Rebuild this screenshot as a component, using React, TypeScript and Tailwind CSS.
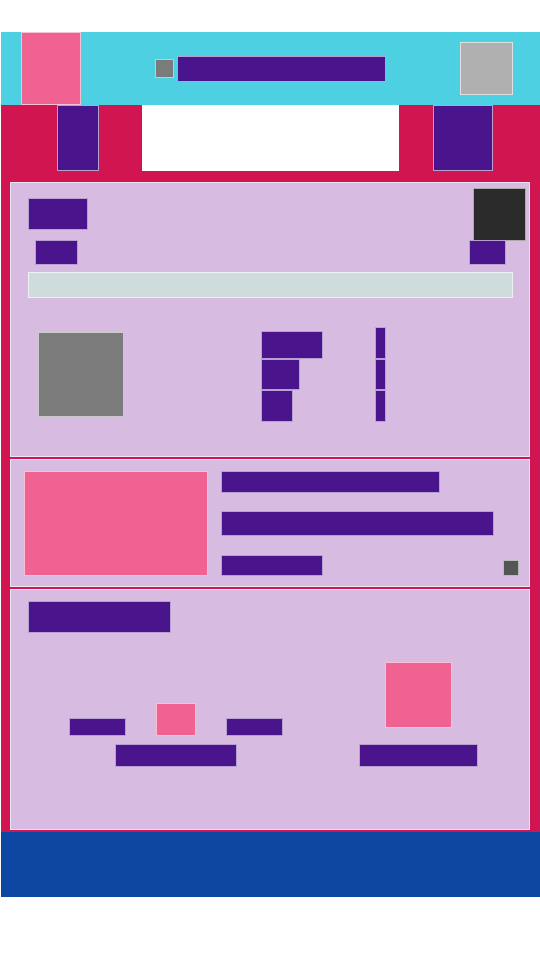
// Colour-block wireframe layout

const edge = 'border border-white/60';

function Block({ className }: { className: string }) {
  return <div className={`${edge} shrink-0 ${className}`}></div>;
}

export default function App() {
  return (
    <div className="min-h-screen bg-white pt-[32px] pl-[1px]">
      {/* Header */}
      <div className="h-[73px] bg-[#4dd0e1] flex items-center">
        <Block className="ml-[20px] w-[60px] h-[73px] bg-[#f06292]" />
        <Block className="ml-[74px] w-[19px] h-[19px] bg-[#7b7b7b]" />
        <Block className="ml-[3px] w-[209px] h-[26px] bg-[#4a148c]" />
        <Block className="ml-[74px] w-[53px] h-[53px] bg-[#b0b0b0]" />
      </div>

      {/* Main red area */}
      <div className="bg-[#d01550] pb-[2px]">
        {/* Nav row */}
        <div className="h-[66px] flex">
          <Block className="ml-[56px] w-[42px] h-[66px] bg-[#4a148c]" />
          <Block className="ml-[43px] w-[257px] h-[66px] bg-white" />
          <Block className="ml-[34px] w-[60px] h-[66px] bg-[#4a148c]" />
        </div>

        <div className="mt-[11px] ml-[9px] w-[520px] flex flex-col gap-[2px]">
          {/* Card 1 */}
          <div className={`${edge} h-[275px] bg-[#d8bbe0] flex flex-col`}>
            <div className="flex justify-between items-start">
              <div className="flex flex-col items-start pt-[15px] pl-[17px]">
                <Block className="w-[60px] h-[32px] bg-[#4a148c]" />
                <Block className="mt-[10px] ml-[7px] w-[43px] h-[25px] bg-[#4a148c]" />
              </div>
              <div className="flex flex-col items-end pt-[5px] pr-[3px]">
                <Block className="w-[53px] h-[53px] bg-[#2b2b2b]" />
                <Block className="-mt-[1px] mr-[20px] w-[37px] h-[25px] bg-[#4a148c]" />
              </div>
            </div>
            <Block className="mt-[7px] ml-[17px] w-[485px] h-[26px] bg-[#cfdcdc]" />
            <div className="mt-[29px] flex items-start">
              <Block className="mt-[5px] ml-[27px] w-[86px] h-[85px] bg-[#7b7b7b]" />
              <div className="mt-[4px] ml-[137px] flex flex-col items-start">
                <Block className="w-[62px] h-[28px] bg-[#4a148c]" />
                <Block className="w-[39px] h-[31px] bg-[#4a148c]" />
                <Block className="w-[32px] h-[32px] bg-[#4a148c]" />
              </div>
              <div className="ml-[52px] flex flex-col">
                <Block className="w-[11px] h-[32px] bg-[#4a148c]" />
                <Block className="w-[11px] h-[31px] bg-[#4a148c]" />
                <Block className="w-[11px] h-[32px] bg-[#4a148c]" />
              </div>
            </div>
          </div>

          {/* Card 2 */}
          <div className={`${edge} h-[128px] bg-[#d8bbe0] flex items-start pt-[11px] pl-[13px]`}>
            <Block className="w-[184px] h-[105px] bg-[#f06292]" />
            <div className="ml-[13px] flex flex-col items-start">
              <Block className="w-[219px] h-[22px] bg-[#4a148c]" />
              <Block className="mt-[18px] w-[273px] h-[25px] bg-[#4a148c]" />
              <div className="mt-[19px] flex items-end">
                <Block className="w-[102px] h-[21px] bg-[#4a148c]" />
                <Block className="ml-[180px] w-[16px] h-[16px] bg-[#555555]" />
              </div>
            </div>
          </div>

          {/* Card 3 */}
          <div className={`${edge} h-[241px] bg-[#d8bbe0] flex flex-col items-start pt-[11px] pl-[17px]`}>
            <Block className="w-[143px] h-[32px] bg-[#4a148c]" />
            <div className="mt-[29px] ml-[41px] flex items-end">
              <div className="w-[214px] flex flex-col items-center">
                <div className="w-full flex items-end justify-between">
                  <Block className="w-[57px] h-[18px] bg-[#4a148c]" />
                  <Block className="w-[40px] h-[33px] bg-[#f06292]" />
                  <Block className="w-[57px] h-[18px] bg-[#4a148c]" />
                </div>
                <Block className="mt-[8px] w-[122px] h-[23px] bg-[#4a148c]" />
              </div>
              <div className="ml-[76px] w-[119px] flex flex-col items-center">
                <Block className="w-[67px] h-[66px] bg-[#f06292]" />
                <Block className="mt-[16px] w-[119px] h-[23px] bg-[#4a148c]" />
              </div>
            </div>
          </div>
        </div>
      </div>

      {/* Footer */}
      <div className="h-[65px] bg-[#0e47a1]"></div>
    </div>
  );
}
